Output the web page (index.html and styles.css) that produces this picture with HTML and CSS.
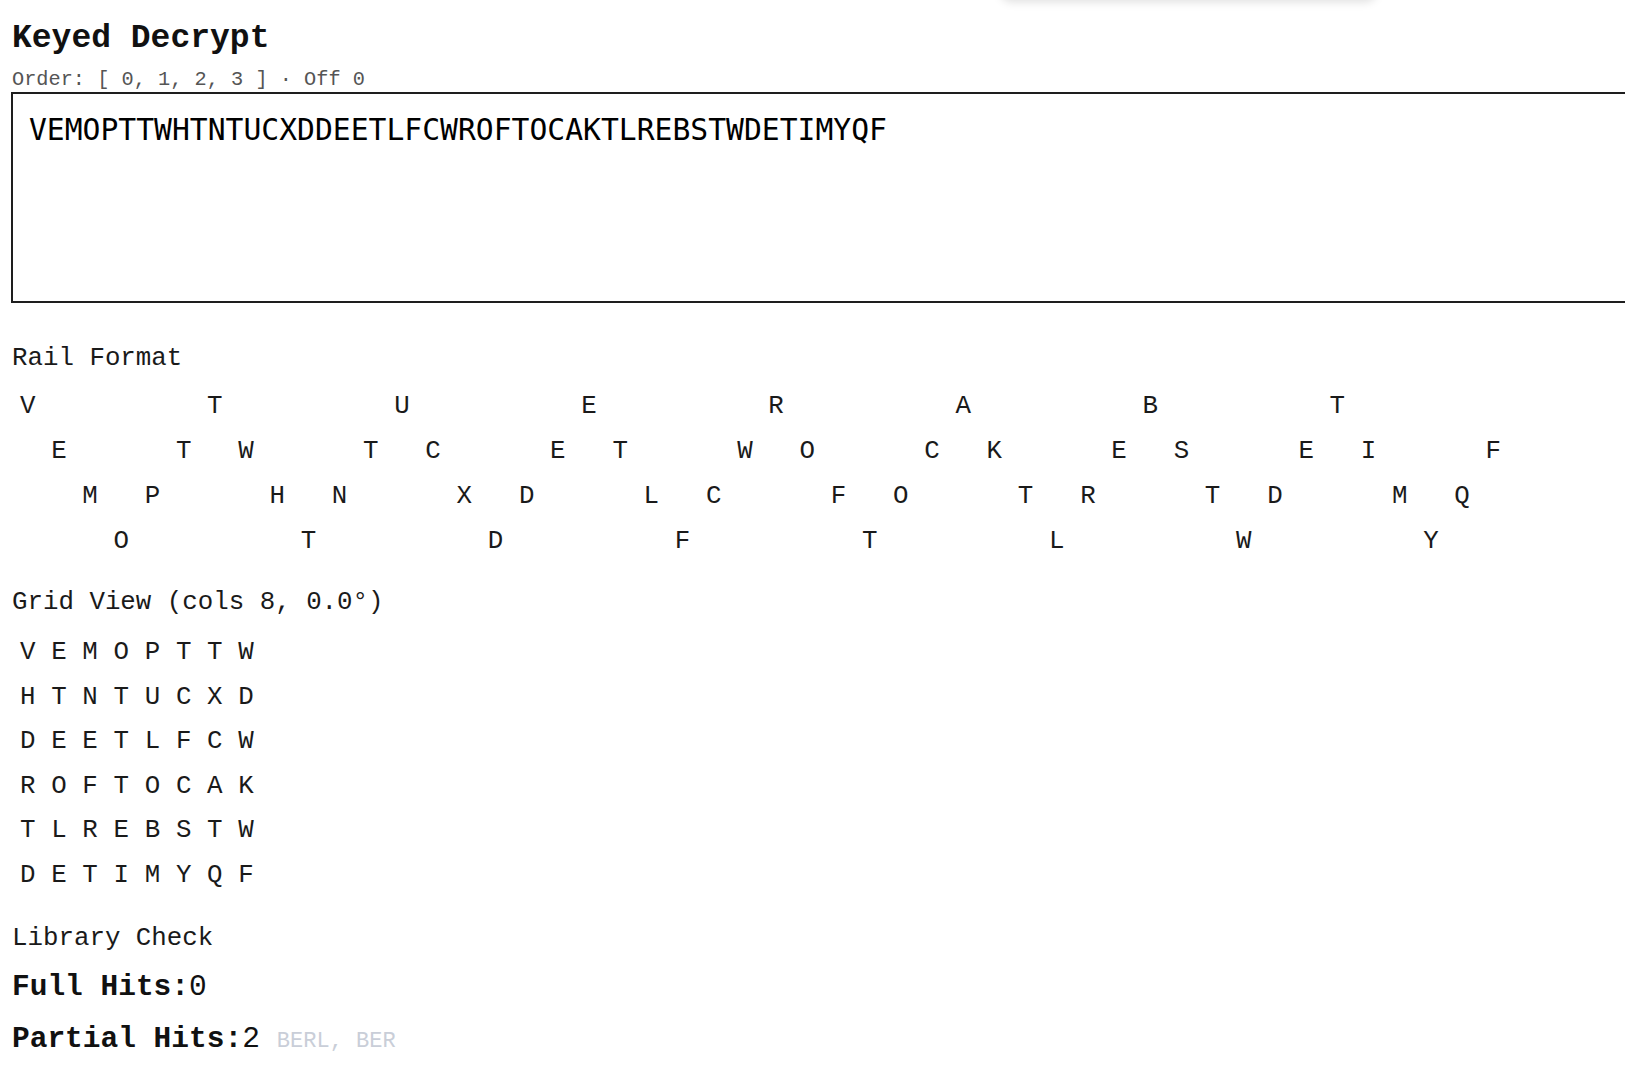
FILE: index.html
```html
<!DOCTYPE html>
<html lang="en">
<head>
<meta charset="utf-8">
<title>Keyed Decrypt</title>
<link rel="stylesheet" href="styles.css">
</head>
<body>
<div class="toast"></div>
<main class="page">
  <h1 class="title">Keyed Decrypt</h1>
  <div class="meta">Order: [ 0, 1, 2, 3 ] · Off 0</div>
  <textarea class="cipher" spellcheck="false">VEMOPTTWHTNTUCXDDEETLFCWROFTOCAKTLREBSTWDETIMYQF</textarea>

  <h2 class="section rail-head">Rail Format</h2>
  <div class="rail">
    <div class="rail-row">V     T     U     E     R     A     B     T</div>
    <div class="rail-row"> E   T W   T C   E T   W O   C K   E S   E I   F</div>
    <div class="rail-row">  M P   H N   X D   L C   F O   T R   T D   M Q</div>
    <div class="rail-row">   O     T     D     F     T     L     W     Y</div>
  </div>

  <h2 class="section grid-head">Grid View (cols 8, 0.0°)</h2>
  <div class="grid">
    <div class="grid-row">VEMOPTTW</div>
    <div class="grid-row">HTNTUCXD</div>
    <div class="grid-row">DEETLFCW</div>
    <div class="grid-row">ROFTOCAK</div>
    <div class="grid-row">TLREBSTW</div>
    <div class="grid-row">DETIMYQF</div>
  </div>

  <h2 class="section lib-head">Library Check</h2>
  <div class="hits full"><span class="hits-label">Full Hits:</span><span class="hits-num">0</span></div>
  <div class="hits partial"><span class="hits-label">Partial Hits:</span><span class="hits-num">2</span><span class="hits-words">BERL, BER</span></div>
</main>
</body>
</html>
```

FILE: styles.css
```css
html, body {
  margin: 0;
  padding: 0;
  background: #ffffff;
  overflow: hidden;
}

body {
  font-family: "Liberation Mono", "Courier New", monospace;
  color: #111111;
}

.toast {
  position: fixed;
  top: -44px;
  left: 1000px;
  width: 377px;
  height: 44px;
  background: #ffffff;
  border-radius: 12px;
  box-shadow: 0 2px 10px rgba(0, 0, 0, 0.13);
}

.page {
  padding: 19px 0 0 12px;
}

.title {
  margin: 0;
  font-size: 33px;
  line-height: 40px;
  font-weight: bold;
  color: #111111;
}

.meta {
  margin-top: 9px;
  font-size: 20.3px;
  line-height: 24px;
  color: #555555;
}

.cipher {
  display: block;
  box-sizing: border-box;
  margin: 0 0 0 -1px;
  width: 1700px;
  height: 211px;
  padding: 18px 16px 12px;
  border: 2px solid #1e1e1e;
  border-radius: 0;
  font-family: "DejaVu Sans Mono", monospace;
  font-size: 29.7px;
  line-height: 35px;
  color: #000000;
  background: #ffffff;
  resize: none;
  outline: none;
}

.section {
  margin: 0;
  font-size: 25.8px;
  line-height: 30px;
  font-weight: normal;
  color: #1a1a1a;
}

.rail-head { margin-top: 41px; }
.grid-head { margin-top: 24px; }
.lib-head { margin-top: 25px; }

.rail, .grid {
  font-size: 25.8px;
  letter-spacing: 15.7px;
  color: #1a1a1a;
  padding-left: 8px;
}

.rail-row, .grid-row {
  white-space: pre;
}

.rail { margin-top: 10px; }
.rail-row { line-height: 45px; height: 45px; }

.grid { margin-top: 13px; }
.grid-row { line-height: 44.6px; height: 44.6px; }

.hits {
  font-size: 29.5px;
  line-height: 40px;
  color: #111111;
}

.hits.full { margin-top: 13px; }
.hits.partial { margin-top: 12.5px; }

.hits-label { font-weight: bold; }
.hits-num { font-weight: normal; }

.hits-words {
  margin-left: 17px;
  font-size: 22px;
  letter-spacing: 0;
  color: #c9ced8;
}
```
